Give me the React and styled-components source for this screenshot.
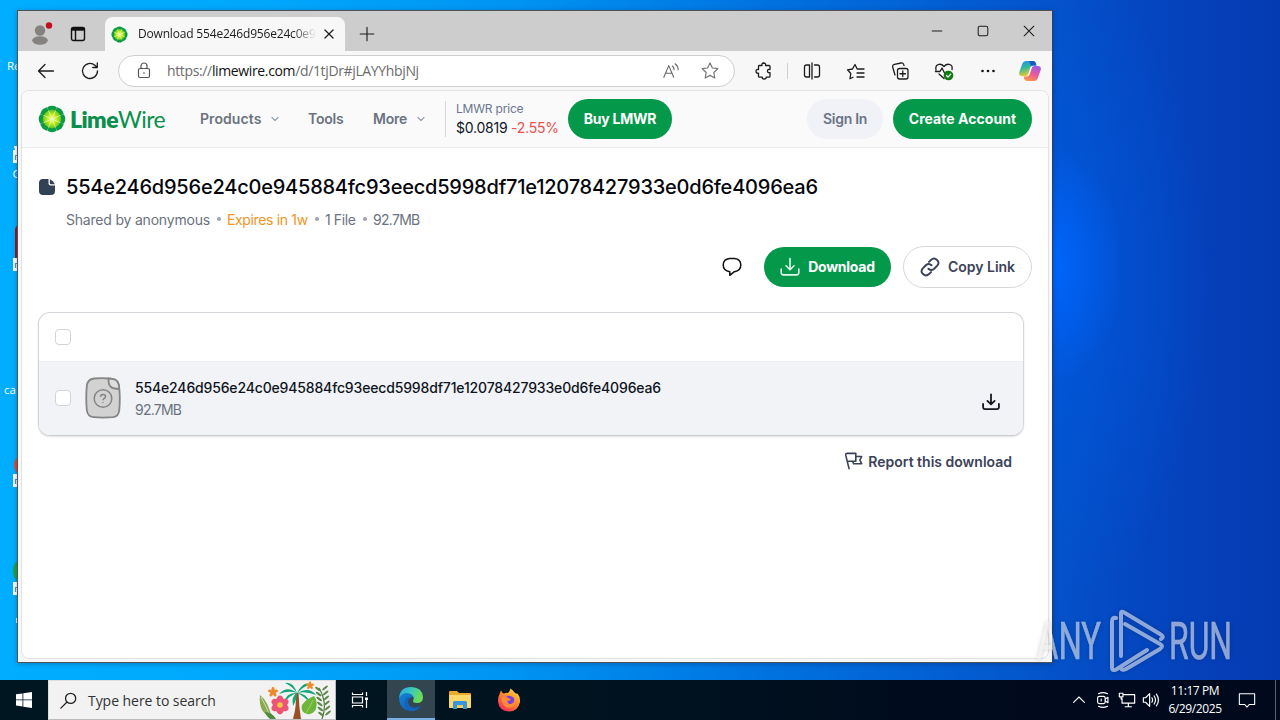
import React from "react";
import styled, { createGlobalStyle } from "styled-components";

const HASH = "554e246d956e24c0e945884fc93eecd5998df71e12078427933e0d6fe4096ea6";

const GlobalStyle = createGlobalStyle`
  * { box-sizing: border-box; }
  body { margin: 0; overflow: hidden; }
  svg { display: block; flex: none; }
`;

const Desktop = styled.div`
  position: relative;
  width: 1280px;
  height: 720px;
  overflow: hidden;
  display: flex;
  flex-direction: column;
  font-family: "Open Sans", "Noto Sans", sans-serif;
  background:
    radial-gradient(ellipse 75px 120px at 1048px 265px, #0068ff 0%, rgba(0, 100, 250, 0.7) 35%, rgba(0, 90, 230, 0) 100%),
    radial-gradient(ellipse 170px 330px at 1040px 285px, rgba(0, 88, 224, 0.8) 0%, rgba(4, 76, 205, 0) 100%),
    linear-gradient(90deg, #00adff 0%, #00a8fc 20%, #0094f2 40%, #0072e0 60%, #0456cc 80%, #0448c2 88%, #053fb8 95%, #053bb2 100%);
`;

const Wallpaper = styled.div`
  flex: 1;
`;

const ShortcutArt = styled.svg`
  position: absolute;
  left: 0;
  top: 0;
`;

/* ---------- browser window ---------- */

const Window = styled.div`
  position: absolute;
  left: 17px;
  top: 10px;
  width: 1036px;
  height: 653px;
  border: 1px solid #4d5357;
  border-right-color: #23406e;
  background: #f7f7f7;
  display: flex;
  flex-direction: column;
  box-shadow: 0 1px 5px rgba(0, 20, 60, 0.3);
`;

const TitleBar = styled.div`
  height: 40px;
  background: #cdcdcd;
  display: flex;
  align-items: flex-end;
`;

const TitleCell = styled.div`
  width: ${(p) => p.$w}px;
  height: 40px;
  display: flex;
  align-items: center;
  justify-content: center;
  padding-top: ${(p) => p.$drop || 0}px;
`;

const Tab = styled.div`
  width: 240px;
  height: 34px;
  margin-left: 11px;
  background: #f7f7f7;
  border-radius: 8px 8px 0 0;
  display: flex;
  align-items: center;
  padding: 0 7px 0 6px;
`;

const TabTitle = styled.div`
  width: 180px;
  margin: 0 2px 0 10px;
  overflow: hidden;
  white-space: nowrap;
  font-size: 12px;
  line-height: 18px;
  letter-spacing: -0.18px;
  color: #1b1b1b;
  mask-image: linear-gradient(90deg, #000 86%, transparent 99%);
`;

const Spacer = styled.div`
  flex: 1;
`;

const Toolbar = styled.div`
  height: 39px;
  display: flex;
  align-items: center;
  padding-left: 6px;
`;

const ToolCell = styled.div`
  width: ${(p) => p.$w || 44}px;
  height: 32px;
  display: flex;
  align-items: center;
  justify-content: center;
`;

const AddressBar = styled.div`
  width: 617px;
  height: 32px;
  margin: 0 6px;
  border: 1px solid #cfcfcf;
  border-radius: 16px;
  background: #fff;
  display: flex;
  align-items: center;
  padding: 0 5px 0 15px;
`;

const Url = styled.div`
  flex: 1;
  margin-left: 13px;
  font-size: 14px;
  letter-spacing: -0.36px;
  color: #6b6b6b;
  white-space: nowrap;
  b { font-weight: 400; color: #111; }
`;

const ToolDivider = styled.div`
  width: 1px;
  height: 16px;
  margin: 0 2px;
  background: #cfcfcf;
`;

const Page = styled.div`
  flex: 1;
  margin: 0 3px 3px;
  border: 1px solid #e4e1df;
  border-radius: 8px;
  background: #fff;
  overflow: hidden;
  font-family: Inter, "Open Sans", sans-serif;
`;

/* ---------- site ---------- */

const SiteHeader = styled.header`
  height: 57px;
  background: #fafafa;
  border-bottom: 1px solid #ececee;
  display: flex;
  align-items: center;
  padding: 0 16px;
`;

const Brand = styled.div`
  width: 162px;
  display: flex;
  align-items: center;
`;

const Wordmark = styled.div`
  margin-left: 4px;
  font-family: Lato, sans-serif;
  font-size: 23px;
  line-height: 26px;
  letter-spacing: -0.55px;
  color: #0b8f4c;
  b { font-weight: 800; }
`;

const NavItem = styled.div`
  width: ${(p) => p.$w}px;
  display: flex;
  align-items: center;
  gap: ${(p) => p.$gap || 0}px;
  font-size: 14px;
  line-height: 20px;
  font-weight: 600;
  padding-bottom: 1px;
  letter-spacing: ${(p) => p.$ls || 0}px;
  color: #6b7280;
`;

const Price = styled.div`
  width: 123px;
  height: 36px;
  border-left: 1px solid #d6d8dc;
  padding-left: 10px;
  white-space: nowrap;
`;

const PriceLabel = styled.div`
  font-size: 12px;
  line-height: 16px;
  height: 17px;
  letter-spacing: -0.2px;
  color: #6b7690;
`;

const PriceValue = styled.div`
  font-size: 14px;
  line-height: 20px;
  letter-spacing: -0.23px;
  color: #0f1729;
  span { color: #ef4e4e; }
`;

const Pill = styled.button`
  width: ${(p) => p.$w}px;
  height: ${(p) => p.$h || 40}px;
  padding: 0;
  border: ${(p) => (p.$kind === "outline" ? "1px solid #d6d8dc" : "0")};
  border-radius: 21px;
  background: ${(p) => ({ primary: "#04984a", soft: "#f1f2f7", outline: "#fff" })[p.$kind]};
  color: ${(p) => ({ primary: "#fff", soft: "#6b7285", outline: "#3a4257" })[p.$kind]};
  display: flex;
  align-items: center;
  justify-content: center;
  gap: 8px;
  font: ${(p) => (p.$kind === "primary" ? 700 : 600)} 14px/20px Inter, sans-serif;
  letter-spacing: ${(p) => p.$ls || 0}px;
  white-space: nowrap;
`;

const HeaderActions = styled.div`
  margin-left: auto;
  display: flex;
  gap: 10px;
`;

const Main = styled.main`
  padding: 25px 16px 0;
`;

const TitleRow = styled.div`
  height: 28px;
  display: flex;
  align-items: center;
`;

const Title = styled.h1`
  margin: 0 0 0 10px;
  font-size: 20px;
  line-height: 28px;
  font-weight: 500;
  letter-spacing: -0.215px;
  color: #05070c;
  white-space: nowrap;
`;

const Meta = styled.div`
  margin: 8px 0 0 28px;
  height: 20px;
  display: flex;
  align-items: center;
  font-size: 14px;
  color: #6b7280;
  white-space: nowrap;
`;

const MetaItem = styled.span`
  width: ${(p) => p.$w}px;
  letter-spacing: ${(p) => p.$ls || 0}px;
  color: ${(p) => p.$color || "inherit"};
`;

const Dot = styled.i`
  width: 4px;
  height: 4px;
  margin: 0 6px 0 7px;
  border-radius: 2px;
  background: #9ca3af;
`;

const Actions = styled.div`
  height: 42px;
  margin-top: 17px;
  display: flex;
  align-items: center;
  justify-content: flex-end;
  gap: 12px;
`;

const CommentButton = styled.div`
  width: 40px;
  display: flex;
  justify-content: center;
`;

const Card = styled.section`
  width: 986px;
  height: 124px;
  margin-top: 24px;
  border: 1px solid #d3d6da;
  border-bottom-color: #cbcdd2;
  border-radius: 12px;
  overflow: hidden;
  box-shadow: 0 1px 2px rgba(0, 0, 0, 0.12);
`;

const CardHead = styled.div`
  height: 48px;
  padding-left: 16px;
  display: flex;
  align-items: center;
`;

const FileRow = styled.div`
  height: 74px;
  padding: 0 23px 1px 16px;
  background: #f1f3f7;
  border-top: 1px solid #eceef2;
  display: flex;
  align-items: center;
`;

const Checkbox = styled.div`
  width: 16px;
  height: 16px;
  border: 1px solid #d1d5db;
  border-radius: 4px;
  background: #fff;
`;

const FileThumb = styled.div`
  margin-left: 14px;
`;

const FileText = styled.div`
  flex: 1;
  margin-left: 14px;
  padding-top: 1px;
`;

const FileName = styled.div`
  font-size: 14px;
  line-height: 20px;
  font-weight: 500;
  letter-spacing: -0.155px;
  color: #0f1420;
`;

const FileSize = styled.div`
  margin-top: 2px;
  font-size: 14px;
  line-height: 20px;
  letter-spacing: -0.75px;
  color: #6b7280;
`;

const RowAction = styled.div`
  padding-top: 8px;
`;

const Report = styled.div`
  margin: 15px 20px 0 0;
  height: 20px;
  display: flex;
  align-items: center;
  justify-content: flex-end;
  gap: 5px;
  font-size: 14px;
  font-weight: 600;
  color: #3a4257;
`;

/* ---------- taskbar ---------- */

const Taskbar = styled.div`
  height: 40px;
  display: flex;
  background: linear-gradient(90deg, #001722 0%, #00131f 45%, #000a1d 80%, #000a1c 100%);
  color: #fff;
`;

const TaskCell = styled.div`
  width: ${(p) => p.$w}px;
  height: 40px;
  display: flex;
  align-items: center;
  justify-content: center;
  padding-right: ${(p) => p.$padRight || 0}px;
  background: ${(p) => (p.$active ? "#33464f" : "transparent")};
  border-bottom: ${(p) => (p.$active ? "2px solid #76b0e4" : "0")};
`;

const Search = styled.div`
  width: 288px;
  height: 40px;
  background: #f2f2f2;
  border: 1px solid #b9bdc0;
  border-top-color: #dedede;
  border-left-color: #dedede;
  display: flex;
  align-items: center;
  padding-left: 11px;
  color: #333;
  font-size: 14px;
  letter-spacing: -0.05px;
`;

const SearchLabel = styled.div`
  flex: 1;
  margin-left: 11px;
`;

const Clock = styled.div`
  width: 64px;
  text-align: center;
  font-size: 12px;
  line-height: 18px;
  padding-top: 2px;
  letter-spacing: -0.4px;
  white-space: nowrap;
`;

const ShowDesktop = styled.div`
  width: 5px;
  margin-left: 8px;
  border-left: 1px solid #5a6270;
`;

const Watermark = styled.svg`
  position: absolute;
  left: 1029px;
  top: 600px;
  filter: drop-shadow(0 0 2px rgba(0, 0, 0, 0.35));
`;

/* ---------- drawings ---------- */

const Line = ({ size = 20, w = 1.2, color = "#1c1c1c", children }) => (
  <svg width={size} height={size} viewBox="0 0 20 20" fill="none" stroke={color} strokeWidth={w} strokeLinecap="round" strokeLinejoin="round">
    {children}
  </svg>
);

const Lime = ({ size }) => (
  <svg width={size} height={size} viewBox="0 0 26 26">
    <defs>
      <radialGradient id="lime" gradientUnits="userSpaceOnUse" cx="13" cy="13" r="10">
        <stop offset="0" stopColor="#fff95a" />
        <stop offset="0.4" stopColor="#c8ef1d" />
        <stop offset="1" stopColor="#3db81c" />
      </radialGradient>
    </defs>
    <circle cx="13" cy="13" r="10" fill="#e8f9d0" />
    {Array.from({ length: 8 }, (_, i) => (
      <g key={i} transform={`rotate(${i * 45} 13 13)`}>
        <path d="M13 12 9.800 4.600Q13 3.100 16.200 4.600Z" fill="url(#lime)" />
        <path d="M8.600 2Q13-.7 17.400 2L16.200 5.200Q13 3.800 9.800 5.200Z" fill="#0c9a43" />
      </g>
    ))}
  </svg>
);

const Chevron = () => (
  <svg width="8" height="6" viewBox="0 0 8 6" fill="none" stroke="#9aa1ad" strokeWidth="1.2" strokeLinecap="round" strokeLinejoin="round">
    <path d="m1 1.500 3 3 3-3" />
  </svg>
);

const DownloadIcon = ({ size, color, w }) => (
  <Line size={size} color={color} w={w}>
    <path d="M10 1.500v11M6 8.800l4 3.900 4-3.900M1.200 12v3.600a2.300 2.300 0 0 0 2.300 2.300h13a2.300 2.300 0 0 0 2.300-2.300V12" />
  </Line>
);

const FileGlyph = () => (
  <svg width="18" height="18" viewBox="0 0 18 18" fill="#334155">
    <path d="M5 1h5.500v4.200A2.400 2.400 0 0 0 13 7.600h4V13a4 4 0 0 1-4 4H5a4 4 0 0 1-4-4V5a4 4 0 0 1 4-4Z" />
    <path d="M11.800 1.200Q15.500 2.500 16.900 6.300H13A1.200 1.200 0 0 1 11.800 5.100Z" />
  </svg>
);

const UnknownFile = () => (
  <svg width="36" height="42" viewBox="0 0 36 42" fill="none" stroke="#858585" strokeWidth="1.800" strokeLinejoin="round">
    <path d="M9 1.500Q17 .8 24 1.500Q29 1.600 31.500 3.600Q34 6 34.300 12Q35.300 21 34.300 33Q33.700 39.400 28 40.200Q18 41.100 8.500 40.200Q2.500 39.500 1.800 33Q.7 21 1.800 9Q2.500 2.300 9 1.500Z" fill="#d2d2d2" />
    <path d="M23.500 1.500Q23.300 7.500 25.500 9.500Q28 12 34.300 12Q34 6 31.500 3.600Q29 1.600 23.500 1.500Z" fill="#dedede" />
    <circle cx="18" cy="21.500" r="8.800" strokeWidth="1.500" />
    <path d="M15.400 19.800Q15.600 17.500 18 17.500Q20.500 17.500 20.500 19.600Q20.500 21 19 21.600Q18 22.100 18 23.300M18 25.300v.6" strokeWidth="1.500" />
  </svg>
);

const Plants = () => (
  <svg width="76" height="38" viewBox="0 0 76 38">
    <path d="M34 38Q38 24 36.500 12L39.500 12Q40 26 42 38Z" fill="#9a4f25" />
    <g fill="#14a578">
      <path d="M38 12Q28 4 20 13Q30 9 38 12Z" />
      <path d="M38 12Q27 11 25 22Q31 14 38 12Z" />
      <path d="M38 12Q34 0 26 2Q33 5 38 12Z" />
      <path d="M38 12Q44 0 51 3Q44 6 38 12Z" />
      <path d="M38 12Q50 5 57 14Q47 10 38 12Z" />
      <path d="M38 12Q48 12 51 22Q45 15 38 12Z" />
      <path d="M38 12Q32 15 34 25Q38 18 38 12Z" />
    </g>
    <g fill="#ef8a2a">
      {[[14, 11, 5], [51, 4.500, 4]].map(([x, y, r]) =>
        [0, 72, 144, 216, 288].map((a) => (
          <ellipse key={`${x}-${a}`} cx={x} cy={y - r * 0.5} rx={r * 0.32} ry={r * 0.55} transform={`rotate(${a} ${x} ${y})`} />
        ))
      )}
    </g>
    <path d="M1 14Q9 20 13 37Q-1 32 1 14Z" fill="#87a951" />
    <path d="M2 16Q7 25 12 37" stroke="#d8ddb0" fill="none" />
    <path d="M6 31Q13 31 17 38H11Q7 35 6 31Z" fill="#4f8b3a" />
    <g fill="#ec5576">
      {[0, 60, 120, 180, 240, 300].map((a) => (
        <ellipse key={a} cx="21" cy="19.500" rx="3.700" ry="5" transform={`rotate(${a} 21 24)`} />
      ))}
    </g>
    <circle cx="21" cy="24" r="2.800" fill="#f6c445" />
    <path d="M55 15Q59 20 57 28Q54 34 48 33Q41 31 43 24Q47 18 55 15Z" fill="#6fb53b" />
    <path d="M47 32Q51 26 54 19" stroke="#9bd164" fill="none" />
    <path d="M63 38Q69 22 60 7" stroke="#4f7940" strokeWidth="1.200" fill="none" />
    <g fill="#5c8848">
      {[8, 13, 18, 23, 28, 33].map((y, i) => (
        <g key={y}>
          <ellipse cx={59 + i * 0.6} cy={y} rx="3.300" ry="1.100" transform={`rotate(35 ${59 + i * 0.6} ${y})`} />
          <ellipse cx={66 + i * 0.6} cy={y - 1} rx="3.500" ry="1.100" transform={`rotate(-40 ${66 + i * 0.6} ${y - 1})`} />
        </g>
      ))}
    </g>
  </svg>
);

const Copilot = () => (
  <svg width="22" height="22" viewBox="0 0 22 22">
    <defs>
      <linearGradient id="cpA" x1="0" y1="0" x2=".3" y2="1">
        <stop offset="0" stopColor="#1b8fe6" /><stop offset=".5" stopColor="#35b89a" /><stop offset="1" stopColor="#e8c92b" />
      </linearGradient>
      <linearGradient id="cpB" x1=".7" y1="0" x2=".2" y2="1">
        <stop offset="0" stopColor="#a257e8" /><stop offset=".5" stopColor="#ec5c92" /><stop offset="1" stopColor="#fb9a4a" />
      </linearGradient>
    </defs>
    <path d="M7 1h7q2 0 2.700 2l.8 2.500H14q-2 0-2.700 2L9 14.500q-.5 1.500-2 1.500H3q-3.500 0-2.700-4L3.400 3.500Q4.300 1 7 1Z" fill="url(#cpA)" />
    <path d="M15 21H8q-2 0-2.700-2l-.8-2.500H8q2 0 2.700-2L13 7.500q.5-1.500 2-1.500h4q3.500 0 2.700 4l-3.100 8.500Q17.700 21 15 21Z" fill="url(#cpB)" />
    <path d="M10 1h4q2 0 2.700 2l.8 2.500H14q-1 0-1.800.7Z" fill="#1758c9" />
  </svg>
);

const EdgeLogo = () => (
  <svg width="26" height="26" viewBox="0 0 26 26">
    <defs>
      <linearGradient id="edA" x1="0" y1="0" x2="1" y2=".3">
        <stop offset="0" stopColor="#2aa6dc" /><stop offset=".5" stopColor="#38c6c4" /><stop offset="1" stopColor="#6bdd55" />
      </linearGradient>
      <linearGradient id="edB" x1="0" y1="0" x2="1" y2="1">
        <stop offset="0" stopColor="#1584d8" /><stop offset="1" stopColor="#0c56a8" />
      </linearGradient>
    </defs>
    <path d="M1 12Q2 1 13 1Q24 1 25 11Q25 17 19 17Q14.500 17 15 14.500Q17 12 14 9.500Q8 6 1 12Z" fill="url(#edA)" />
    <path d="M1 13Q3 7 9 7Q14 7.500 15.500 11Q10 11 10 16Q10 20 15 21.500Q19 22.500 23 19.500Q19 25.500 12.500 25Q2 24 1 13Z" fill="url(#edB)" />
    <path d="M10 15Q9 19 13 21.500Q18 23.500 23 19.500Q19 26 12 25Q5 21 7 14Q8 11 12 11Q10 12.500 10 15Z" fill="#1263b9" />
  </svg>
);

const Explorer = () => (
  <svg width="22" height="20" viewBox="0 0 22 20">
    <path d="M0 2Q0 1 1 1h7l2 2h11q1 0 1 1v13q0 1-1 1H1q-1 0-1-1Z" fill="#e9a92c" />
    <path d="M0 5h22v12q0 1-1 1H1q-1 0-1-1Z" fill="#fcd769" />
    <path d="M4 19v-6.500Q4 11 5.500 11h11q1.500 0 1.500 1.500V19h-4v-4H8v4Z" fill="#3a96dc" />
    <path d="M8 15h6v2H8Z" fill="#f3c64c" />
  </svg>
);

const Firefox = () => (
  <svg width="24" height="24" viewBox="0 0 24 24">
    <defs>
      <linearGradient id="ffA" x1=".85" y1="0" x2=".2" y2="1">
        <stop offset="0" stopColor="#ffe14a" /><stop offset=".45" stopColor="#ff8a2a" /><stop offset="1" stopColor="#f5285f" />
      </linearGradient>
    </defs>
    <path d="M3 5Q3.500 3 4 2.500Q5 5 7 5.500Q9 4.500 11 5Q13 3 13.500.5Q16 2 18 5Q20 6 20.500 5.500Q23.500 9 23 14Q21 23.500 12 23.500Q2 23 1 13.500Q1 8 3 5Z" fill="url(#ffA)" />
    <circle cx="12.300" cy="13" r="5.300" fill="#7a3fe0" />
    <path d="M5 9Q9 8 12 10.500L14 11Q13 13 10.500 13Q10 16 14 16Q18 15 17 10Q20 14 17.500 17.500Q14 21 9 19Q4 16 5 9Z" fill="#ff8b35" />
  </svg>
);

const Shortcuts = () => (
  <ShortcutArt width="18" height="680" viewBox="0 0 18 680">
    <g fill="#fff" fontFamily="Open Sans, sans-serif" fontSize="11.500">
      <text x="7" y="70">Re</text>
      <text x="12.500" y="178">C</text>
      <text x="4" y="394">ca</text>
    </g>
    <path d="M14 146h4v17h-5v-13h2Z" fill="#fff" />
    <path d="M15 229q1-3 3-4v35h-3Z" fill="#a6121e" />
    <circle cx="25" cy="465" r="11" fill="#e2483b" />
    <circle cx="27" cy="571" r="14" fill="#22a045" />
    {[150, 258, 474, 582].map((y) => (
      <g key={y}>
        <path d={`M13 ${y}h5v13h-5z`} fill="#fff" />
        <path d={`M15.500 ${y + 10}v-4.500h2.500`} stroke="#5d8fbc" strokeWidth="1.200" fill="none" />
      </g>
    ))}
    <path d="M17 299h1v2h-1zM16 618h2v5h-2z" fill="#d7efff" />
  </ShortcutArt>
);

export default function App() {
  return (
    <Desktop>
      <GlobalStyle />
      <Wallpaper />
      <Shortcuts />
      <Window>
        <TitleBar>
          <TitleCell $w={44} $drop={6}>
            <svg width="26" height="26" viewBox="0 0 26 26">
              <circle cx="13" cy="9.500" r="5.200" fill="#85817f" />
              <ellipse cx="13" cy="19.500" rx="7.800" ry="4.200" fill="#85817f" />
              <circle cx="22" cy="4.500" r="3.200" fill="#c50f1f" />
            </svg>
          </TitleCell>
          <TitleCell $w={32} $drop={5}>
            <svg width="16" height="16" viewBox="0 0 16 16" fill="none" stroke="#111" strokeWidth="1.400">
              <rect x="1.500" y="1.500" width="13" height="13" rx="2" />
              <path d="M1.500 3.200h13" strokeWidth="3" />
              <path d="M5.500 4v10.500" />
            </svg>
          </TitleCell>
          <Tab>
            <Lime size={17} />
            <TabTitle>Download 554e246d956e24c0e945884</TabTitle>
            <Line size={18} w={1.4}><path d="m5.500 5.500 9 9M14.500 5.500l-9 9" /></Line>
          </Tab>
          <TitleCell $w={44} $drop={5}>
            <Line size={16} w={1.4}><path d="M1.500 10h17M10 1.500v17" /></Line>
          </TitleCell>
          <Spacer />
          <TitleCell $w={46}><Line size={12} w={1.7}><path d="M2 10h16" /></Line></TitleCell>
          <TitleCell $w={46}><Line size={12} w={1.7}><rect x="2" y="2" width="16" height="16" rx="3" /></Line></TitleCell>
          <TitleCell $w={46}><Line size={12} w={1.8}><path d="m2 2 16 16M18 2 2 18" /></Line></TitleCell>
        </TitleBar>

        <Toolbar>
          <ToolCell><Line w={1.3}><path d="M17.500 10h-15M9 3.500 2.500 10 9 16.500" /></Line></ToolCell>
          <ToolCell><Line w={1.3}><path d="M17.500 10a7.500 7.500 0 1 1-2.600-5.700l2.100 1.900M17.300 2v4.500h-4.500" /></Line></ToolCell>
          <AddressBar>
            <Line color="#555"><rect x="4.500" y="7.500" width="11" height="9" rx="1.500" /><path d="M7 7.500V5a3 3 0 0 1 6 0v2.500M10 11.700v.6" /></Line>
            <Url>https://<b>limewire.com</b>/d/1tjDr#jLAYYhbjNj</Url>
            <ToolCell $w={39}>
              <Line color="#666" size={18}><path d="m2 17 5.500-13 5.500 13M4 12.500h7M11.500 4.500q2 1.500 2 4M14.500 2q3.500 2.500 3.500 6.500" /></Line>
            </ToolCell>
            <ToolCell $w={39}>
              <Line color="#777"><path d="m10 2 2.400 5 5.400.7-4 3.800 1 5.500L10 14.400 5.200 17l1-5.500-4-3.800 5.400-.7Z" /></Line>
            </ToolCell>
          </AddressBar>
          <ToolCell>
            <Line w={1.3}><path d="M6 4.500h3q-.5-2.300 1.500-2.500Q13 2 12.500 4.500H16q1 0 1 1V8.500q-2.500-.5-2.500 1.600Q14.500 12 17 11.700V15q0 1.200-1 1.200h-2.800Q13.500 18 11 18q-2 0-1.700-1.800H6.500q-1 0-1-1v-3Q3 12.500 3 10.300 3 8 5.500 8.500V5.500Q5.500 4.500 6 4.500Z" /></Line>
          </ToolCell>
          <ToolDivider />
          <ToolCell>
            <Line w={1.3}><path d="M7.500 4H4.500Q2.500 4 2.500 6v8q0 2 2 2h3V4ZM12.500 4h3q2 0 2 2v8q0 2-2 2h-3M10 2v16" /></Line>
          </ToolCell>
          <ToolCell>
            <Line w={1.3}><path d="M7 16.200 4 17.800l.8-5.300L1.500 8.800l5-.8L9 3.500 11.200 8H18M11 12h7M11 16h7" /></Line>
          </ToolCell>
          <ToolCell>
            <Line w={1.3}><rect x="7.500" y="7.500" width="10.500" height="10.500" rx="2" /><path d="M12.750 10v5.500M10 12.750h5.500M5 14 2.800 6.500Q2 4 4.500 3.300L11 2q2.500-.5 3 2.500" /></Line>
          </ToolCell>
          <ToolCell>
            <Line w={1.3}>
              <path d="M2 9Q1 4 5 3.300 8 3 10 5.500 12 3 15 3.300 19 4 18 8.500M1.500 10.500H6l2-3.500 3 6 1.500-2.500M5 13l5 4.500" />
              <circle cx="14.500" cy="14.500" r="4.200" fill="#107c10" stroke="#107c10" />
              <path d="m12.500 14.500 1.500 1.600 2.700-3" stroke="#fff" />
            </Line>
          </ToolCell>
          <ToolCell>
            <svg width="20" height="20" fill="#111"><circle cx="4.500" cy="10" r="1.300" /><circle cx="10" cy="10" r="1.300" /><circle cx="15.500" cy="10" r="1.300" /></svg>
          </ToolCell>
          <ToolCell $w={40}><Copilot /></ToolCell>
        </Toolbar>

        <Page>
          <SiteHeader>
            <Brand>
              <Lime size={28} />
              <Wordmark><b>Lime</b>Wire</Wordmark>
            </Brand>
            <NavItem $w={108} $gap={10} $ls={0.08}>Products<Chevron /></NavItem>
            <NavItem $w={65} $ls={-0.2}>Tools</NavItem>
            <NavItem $w={72} $gap={10} $ls={-0.2}>More<Chevron /></NavItem>
            <Price>
              <PriceLabel>LMWR price</PriceLabel>
              <PriceValue>$0.0819 <span>-2.55%</span></PriceValue>
            </Price>
            <Pill $kind="primary" $w={104} $ls={-0.25}>Buy LMWR</Pill>
            <HeaderActions>
              <Pill $kind="soft" $w={76} $ls={-0.3}>Sign In</Pill>
              <Pill $kind="primary" $w={139} $ls={0.05}>Create Account</Pill>
            </HeaderActions>
          </SiteHeader>
          <Main>
            <TitleRow>
              <FileGlyph />
              <Title>{HASH}</Title>
            </TitleRow>
            <Meta>
              <MetaItem $w={144} $ls={-0.2}>Shared by anonymous</MetaItem>
              <Dot />
              <MetaItem $w={81} $ls={-0.35} $color="#ee9526">Expires in 1w</MetaItem>
              <Dot />
              <MetaItem $w={31} $ls={-0.4}>1 File</MetaItem>
              <Dot />
              <MetaItem $w={48} $ls={-0.7}>92.7MB</MetaItem>
            </Meta>
            <Actions>
              <CommentButton>
                <Line size={20} w={1.5} color="#111">
                  <path d="M7.500 1.500h5q6.300.8 6.300 6.400T12.500 14.800H12L7.800 18.300V14.800Q1.200 13.500 1.200 8 1.200 2.300 7.500 1.500Z" />
                </Line>
              </CommentButton>
              <Pill $kind="primary" $w={127} $ls={-0.25}>
                <DownloadIcon size={20} color="#e5f7ea" w={1.6} />
                Download
              </Pill>
              <Pill $kind="outline" $w={129} $h={42}>
                <Line size={20} w={2} color="#3a4257">
                  <path d="m9 4.900 2-2q3-2.700 6 0t0 6l-3.100 3.100q-2.800 2.300-5.400-.3M11 15.100l-2 2q-3 2.700-6 0t0-6l3.100-3.100q2.800-2.300 5.400.3" />
                </Line>
                Copy Link
              </Pill>
            </Actions>
            <Card>
              <CardHead><Checkbox /></CardHead>
              <FileRow>
                <Checkbox />
                <FileThumb><UnknownFile /></FileThumb>
                <FileText>
                  <FileName>{HASH}</FileName>
                  <FileSize>92.7MB</FileSize>
                </FileText>
                <RowAction><DownloadIcon size={18} color="#15181f" w={2} /></RowAction>
              </FileRow>
            </Card>
            <Report>
              <Line size={18} w={1.8} color="#3a4257">
                <path d="M4.500 18.500.8 3.500Q.5 1.500 2.500 1.500h9.500v8.800H3M12 5h6.500l-2 4 2 4H9.500l-.8-2.500" />
              </Line>
              Report this download
            </Report>
          </Main>
        </Page>
      </Window>

      <Watermark width="210" height="78" viewBox="0 0 210 78">
        <g fill="#fff" stroke="#fff" strokeWidth=".6" opacity=".55" fontFamily="Roboto, sans-serif" fontSize="52">
          <text x="8" y="59" textLength="64" lengthAdjust="spacingAndGlyphs">ANY</text>
          <text x="140" y="59" textLength="63" lengthAdjust="spacingAndGlyphs">RUN</text>
        </g>
        <g fill="none" stroke="#fff" strokeWidth="4" strokeLinejoin="round" strokeLinecap="round" opacity=".55">
          <path d="M87 18Q83 17 83 22V67q0 5 5 2l30-19" />
          <path d="M92 56V14q0-4 4-1l35 21q5 3 1 5" />
          <path d="M96 24l35 20q4 2 0 5L97 69q-4 2-5-1" />
        </g>
      </Watermark>

      <Taskbar>
        <TaskCell $w={48}>
          <svg width="16" height="16" viewBox="0 0 16 16" fill="#fff"><path d="M0 2.300 6.500 1.400V7.500H0ZM7.300 1.300 16 0v7.500H7.300ZM0 8.300h6.500v6.200L0 13.600ZM7.300 8.300H16V16l-8.700-1.300Z" /></svg>
        </TaskCell>
        <Search>
          <Line size={17} w={1.5} color="#222"><circle cx="12.500" cy="7.500" r="6" /><path d="M8 12 1 19" /></Line>
          <SearchLabel>Type here to search</SearchLabel>
          <Plants />
        </Search>
        <TaskCell $w={51} $padRight={3}>
          <svg width="18" height="18" viewBox="0 0 18 18" fill="none" stroke="#fff" strokeWidth="1.200">
            <path d="M1.500 1.500v2h10v-2M1.500 16.500v-2h10v2M1.500 6h10v6h-10ZM15.500 1v4M15.500 9v8" /><path d="M14 6.500h3v2.500h-3z" fill="#fff" stroke="none" />
          </svg>
        </TaskCell>
        <TaskCell $w={48} $active><EdgeLogo /></TaskCell>
        <TaskCell $w={50}><Explorer /></TaskCell>
        <TaskCell $w={48}><Firefox /></TaskCell>
        <Spacer />
        <TaskCell $w={24}><Line size={12} w={1.8} color="#fff"><path d="m1 14 9-9 9 9" /></Line></TaskCell>
        <TaskCell $w={24}>
          <Line size={18} color="#fff" w={1.3}><rect x="4" y="6" width="8.500" height="8" rx="2" /><path d="m12.500 9 3-2v6l-3-2M5 3Q10 .5 15 3M5 17q5 2.500 10 0M8 9v2" /></Line>
        </TaskCell>
        <TaskCell $w={24}>
          <Line size={18} color="#fff" w={1.3}><path d="M6.500 4H18.500v9.500H4.500V8.500M8 17.500h7M11.500 13.500v4M1.500 2.500h4v4h-4ZM3.500 6.500v2.500" /></Line>
        </TaskCell>
        <TaskCell $w={24}>
          <Line size={18} color="#fff" w={1.3}><path d="M1.500 7.500H4L8.500 3v14L4 12.500H1.500ZM11 7.500q1.500 2.500 0 5M13.500 5.500q3 4.500 0 9M16 3.500q4.500 6.500 0 13" /></Line>
        </TaskCell>
        <Clock>11:17 PM<br />6/29/2025</Clock>
        <TaskCell $w={40}>
          <Line size={18} color="#fff" w={1.2}><path d="M1.500 3h17v12h-6L10 17.800 7.500 15h-6Z" /></Line>
        </TaskCell>
        <ShowDesktop />
      </Taskbar>
    </Desktop>
  );
}
